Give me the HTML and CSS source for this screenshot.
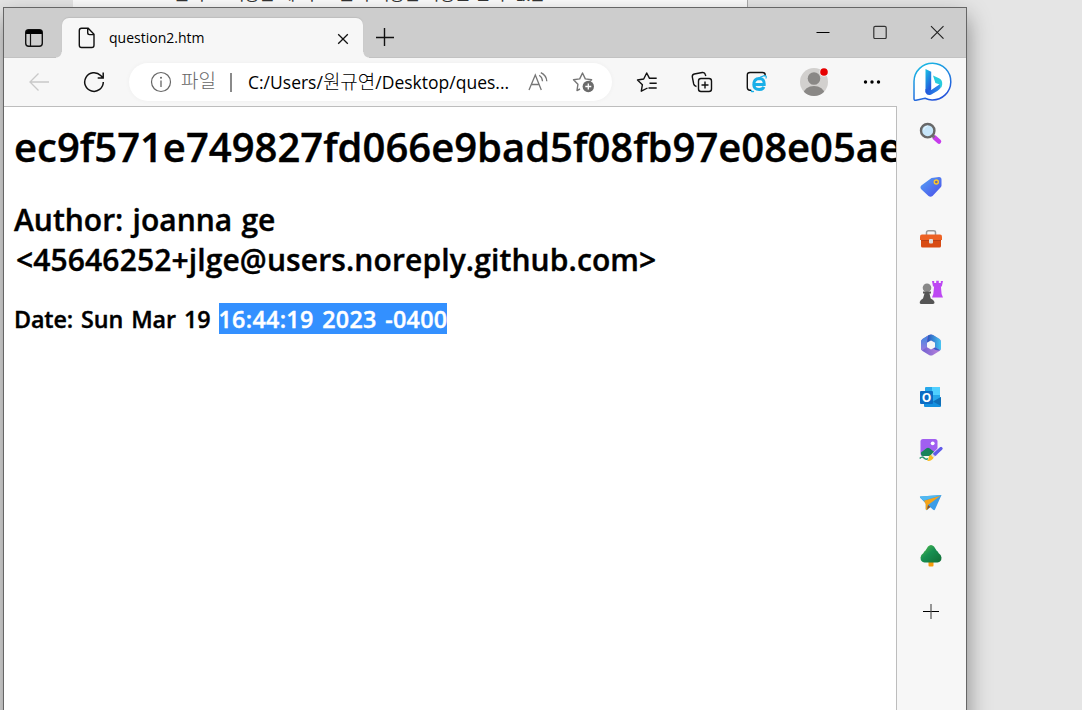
FILE: index.html
```html
<!DOCTYPE html>
<html lang="ko">
<head>
<meta charset="utf-8">
<title>question2.htm</title>
<link rel="stylesheet" href="styles.css">
</head>
<body>
<div class="backdrop"><div class="backdrop-text">들의 호 기능은 에 이 그 들의 기능은 가능을 할 수 없습</div></div>
<main class="window">
  <header class="tabstrip">
    <svg class="tab-menu" width="20" height="20" viewBox="0 0 20 20"><rect x="1.7" y="1.7" width="16.6" height="16.6" rx="3" fill="none" stroke="#111" stroke-width="1.4"/><path d="M2 6V4q0-2 2-2h12q2 0 2 2v2z"/><path d="M6.5 6v12" stroke="#111" stroke-width="1.2"/></svg>
    <div class="tab">
      <svg class="file" width="18" height="22" viewBox="0 0 18 22" fill="none" stroke="#111" stroke-width="1.4"><path d="M3.5 1.2h6.7l5.8 6v11.1q0 2.2-2.2 2.2H3.5q-2.2 0-2.2-2.2V3.400q0-2.200 2.200-2.200zM9.700 1.500v4.300q0 1.800 1.800 1.800h4.200"/></svg>
      <span class="tab-title">question2.htm</span>
      <svg class="tab-close" width="12" height="12" viewBox="0 0 12 12"><path d="M1.2 1.2l9.600 9.600M10.800 1.200l-9.600 9.600" stroke="#111" stroke-width="1.3"/></svg>
    </div>
    <svg class="new-tab" width="18" height="18" viewBox="0 0 18 18"><path d="M0 9.500h18M8.500 0v18" stroke="#111" stroke-width="1.4"/></svg>
    <div class="controls">
      <svg width="14" height="14" viewBox="0 0 14 14"><path d="M.5 7.500h13" stroke="#000"/></svg>
      <svg width="14" height="14" viewBox="0 0 14 14"><rect x=".8" y="1.300" width="12.4" height="12.4" rx="1.5" fill="none" stroke="#333" stroke-width="1.2"/></svg>
      <svg width="14" height="14" viewBox="0 0 14 14"><path d="M1 1.200l12.500 12.500M13.500 1.200L1 13.700" stroke="#222" stroke-width="1.1"/></svg>
    </div>
  </header>
  <div class="body">
    <section class="main">
      <div class="toolbar">
        <svg class="back" width="22" height="20" viewBox="0 0 22 20" fill="none" stroke="#c9c9c9" stroke-width="1.3"><path d="M21 10H2M10.500 1.500L2 10l8.500 8.500"/></svg>
        <svg class="reload" width="22" height="22" viewBox="0 0 22 22" fill="none" stroke="#111" stroke-width="1.5"><path d="M20.300 11A9.300 9.300 0 1 1 17.700 4.600L20 7M20.200 1.500V7h-5.500"/></svg>
        <div class="address">
          <svg class="info" width="22" height="22" viewBox="0 0 22 22"><circle cx="11" cy="11" r="9.500" fill="none" stroke="#666" stroke-width="1.200"/><path d="M11 9.500v6.500" stroke="#666" stroke-width="1.300"/><circle cx="11" cy="6.700" r="1" fill="#666"/></svg>
          <span class="scheme">파일</span><span class="divider"></span>
          <span class="url">C:/Users/<span class="hangul">원규연</span>/Desktop/ques...</span>
          <svg class="read" width="22" height="22" viewBox="0 0 22 22" fill="none" stroke="#767676" stroke-width="1.300"><path d="M2 19L8.300 4l6 15M4.300 13.500h7.800M12.200 4.200q3 1.800 3.300 6M13.800 1.700q5.500 2.500 6 8.500"/></svg>
          <svg class="star" width="24" height="22" viewBox="0 0 24 22"><path d="M8 18l-3 1.500.9-6.200L1.500 8.800l6.200-.9L10.500 2l2.800 5.900 6.300.9-2.100 2" fill="none" stroke="#767676" stroke-width="1.400" stroke-linejoin="round"/><circle cx="16.300" cy="15.500" r="5.700" fill="#6b6b6b"/><path d="M13.300 15.500h6M16.300 12.500v6" stroke="#fff" stroke-width="1.300"/></svg>
        </div>
        <svg class="favorites" width="22" height="22" viewBox="0 0 22 22" fill="none" stroke="#111" stroke-width="1.400" stroke-linejoin="round"><path d="M11.500 17l-6.200 3.200 1.100-6.500L1.500 9l6.200-1L10.700 2l2.800 5.300h7.200M13.500 12.300h7.200M12.500 17h8.200"/></svg>
        <svg class="collections" width="22" height="22" viewBox="0 0 22 22" fill="none" stroke="#111" stroke-width="1.400"><path d="M5.500 15.500q-2.300-.3-2.800-2.500L1.300 6Q1 3.600 3.300 3l8-1.500q2.500-.3 3 2L14.800 5"/><rect x="7.500" y="7.500" width="13" height="13" rx="2.500"/><path d="M10.500 14h7M14 10.500v7"/></svg>
        <svg class="ie-mode" width="22" height="22" viewBox="0 0 22 22" fill="none"><path d="M5 19.300H4q-2.700 0-2.700-2.700V4Q1.300 1.500 4 1.500h12.500q2.700 0 2.700 2.500v1" stroke="#111" stroke-width="1.400"/><path d="M9 13.600h9.200q.3-6-4.700-6-5.700.2-5.700 6 0 5 5.400 5 3.700-.2 4.700-2.700" stroke="#19afe8" stroke-width="3"/><path d="M6 18.800q-2 2.500 2 1.500M7 12Q12 6 18.700 4.600q2.400 0 1.100 3" stroke="#19afe8" stroke-width="1.200"/></svg>
        <svg class="profile" width="30" height="30" viewBox="0 0 30 30"><defs><clipPath id="avatar"><circle cx="14" cy="16" r="14"/></clipPath></defs><circle cx="14" cy="16" r="14" fill="#d2d0ce"/><g clip-path="url(#avatar)" fill="#8a8886"><circle cx="14" cy="12.500" r="6.300"/><ellipse cx="14" cy="28" rx="10.500" ry="8"/></g><circle cx="24" cy="6" r="4.500" fill="#f7f7f7"/><circle cx="24" cy="6" r="3.800" fill="#e60000"/></svg>
        <svg class="more" width="18" height="6" viewBox="0 0 18 6"><circle cx="2.500" cy="3" r="1.700"/><circle cx="9" cy="3" r="1.700"/><circle cx="15.500" cy="3" r="1.700"/></svg>
      </div>
      <article class="page">
        <h1>ec9f571e749827fd066e9bad5f08fb97e08e05ae</h1>
        <h2><span class="author">Author: joanna ge</span><br><span class="email">&lt;45646252+jlge@users.noreply.github.com&gt;</span></h2>
        <h3><span class="date">Date: Sun Mar 19 </span><mark>16:44:19 2023 -0400</mark></h3>
      </article>
    </section>
    <aside class="sidebar">
      <svg class="bing" width="42" height="42" viewBox="0 0 42 42"><defs><linearGradient id="b1" x1="0" y1="0" x2=".5" y2="1"><stop stop-color="#19c5e5"/><stop offset="1" stop-color="#2455db"/></linearGradient><linearGradient id="b2" x2="1" y2="0"><stop stop-color="#2357da"/><stop offset="1" stop-color="#2d91ed"/></linearGradient></defs><path d="M3 37.500V20A18.400 18.400 0 1 1 21 38.700q-3.200 0-7-1.700L5 39q-2 .2-2-1.500z" transform="translate(0 .3)" fill="#fff" stroke="url(#b1)" stroke-width="1.500"/><path d="M14.500 8l5.700 2.700v18l-5.700 2.500z" fill="url(#b1)"/><path d="M14.500 28l5.800 1 9.500-6.500q1 5-3.500 7.500l-6 3.500q-4 1.700-5.800-2z" fill="url(#b2)"/><path d="M22 14.500l6.500 3q3 1.500 2.700 6-.3 2.500-1.800 4 .5-3.500-2-4.500l-3-1z" fill="#28ccdd"/></svg>
      <svg width="24" height="24" viewBox="0 0 24 24"><path d="M15.500 15.500l4.500 4" stroke="#c63cec" stroke-width="4.500" stroke-linecap="round"/><path d="M13.500 13.500l2 2" stroke="#777" stroke-width="2.500"/><circle cx="8.700" cy="8.700" r="6.700" fill="#c7e6fa" stroke="#686868" stroke-width="2.400"/><path d="M4.500 8q.8-3.500 4-4" stroke="#e8f7ff" fill="none"/></svg>
      <svg width="24" height="24" viewBox="0 0 24 24"><defs><linearGradient id="tag" x2="1" y2="1"><stop stop-color="#56a5f5"/><stop offset="1" stop-color="#4a4be9"/></linearGradient></defs><path d="M12.500 3l7.500-1q2.500 0 2.500 2.500v6q0 1-1 2l-8 8.500q-2 1.500-4 0l-7-6.500q-2-2-.2-4z" fill="url(#tag)"/><circle cx="17.300" cy="7" r="2" fill="#706b9b" stroke="#ffc928" stroke-width="1.400"/></svg>
      <svg width="24" height="24" viewBox="0 0 24 24"><path d="M7.500 8V5.500q0-1.700 2-1.700h5q2 0 2 1.700V8" fill="none" stroke="#999" stroke-width="1.500"/><rect x="2" y="11" width="20" height="9.500" rx="1.500" fill="#d84b13"/><path d="M3 7.500h18q2 0 2 2v3.500H1V9.500q0-2 2-2z" fill="#ed6225"/><path d="M2 13h20v1H2z" fill="#b93f14"/><rect x="10" y="12" width="4" height="4.500" rx="1" fill="#ddd"/></svg>
      <svg width="24" height="24" viewBox="0 0 24 24"><path d="M13 1h2.200v2h2V.7h2.600V3h2V1H24l-1.200 5.500h-.9l.7 7.500 1.400 3.500H13l1.300-3.500.8-7.500H14z" fill="#bd48f3"/><circle cx="8" cy="7.700" r="4.300" fill="#888"/><path d="M4 11.500h8v2h-1.500l1.200 5q3 1 3.800 3.500.2 2-1.500 2H2q-1.500 0-1.300-2 .8-2.500 3.300-3.500l1.500-5H4z" fill="#555"/></svg>
      <svg width="24" height="24" viewBox="0 0 24 24"><defs><linearGradient id="m1" x2="1"><stop stop-color="#6c5fd0"/><stop offset="1" stop-color="#c084dc"/></linearGradient><linearGradient id="m2"><stop stop-color="#2b50bb"/><stop offset="1" stop-color="#48c7f2"/></linearGradient><linearGradient id="m3" x2="0" y2="1"><stop stop-color="#3c8ae0"/><stop offset="1" stop-color="#9a7be0"/></linearGradient></defs><path d="M10 2Q12 .8 14 2l6.500 4Q22 7 22 9v6q0 2-1.500 3L14 22q-2 1.200-4 0l-6.500-4Q2 17 2 15V9q0-2 1.500-3z" fill="url(#m1)"/><path d="M9 2.500L10 2q2-1 4 0l6.500 4Q22 7 22 9v6q0 1.500-.8 2.300L16 14V9.700l-4-2.200-4 2.200z" fill="url(#m2)"/><path d="M9 2.500Q7.500 4 8 7v7l-5 3.500Q2 16.500 2 15V9q0-2 1.500-3z" fill="url(#m3)"/><path d="M16 14.300l5.200 3q-4 .7-7-1.800z" fill="#3b5fc9"/><path d="M12 7.500l4 2.200v4.600l-4 2.200-4-2.200V9.700z" fill="#f7f7f7"/></svg>
      <svg class="outlook" width="24" height="24" viewBox="0 0 24 24"><rect x="6" y="2" width="15" height="18" rx="1" fill="#28a8ea"/><path d="M13 2h8v8h-8z" fill="#50d0ff"/><path d="M5 12l9 5 8-5v9q0 1-1 1H6q-1 0-1-1z" fill="#1490df"/><path d="M22 12v9l-8-4.500z" fill="#0f6fb8"/><rect x="1" y="6" width="13" height="13" rx="1" fill="#0c6cc4"/><text x="7.500" y="17">O</text></svg>
      <svg width="24" height="24" viewBox="0 0 24 24"><rect x="1.500" y="1" width="17" height="17" rx="2.500" fill="#a15ff0"/><path d="M2 14.500l5.500-4.300q1.500-1 3 0l5.500 4.300-2 3.500H4q-2 0-2-2z" fill="#17835a"/><circle cx="13.700" cy="5.300" r="1.900" fill="#fff"/><path d="M.7 20.500q2.500-2.500 4.300-.5t4 .7" fill="none" stroke="#27946b" stroke-width="1.500"/><path d="M15 17l7-6.500" stroke="#fff" stroke-width="5" stroke-linecap="round" opacity=".7"/><path d="M15.500 16.500l6.500-6" stroke="#615be9" stroke-width="3.300" stroke-linecap="round"/><path d="M13.500 15.500l2.800 2.800-1.800 1.500-2.700-2.700z" fill="#e0e0e0"/><path d="M11.500 16.700l3.200 3.100q-2 3.700-6.700 3 2-1 1.500-3 .3-2.300 2-3.100z" fill="#f8bd24"/></svg>
      <svg width="24" height="24" viewBox="0 0 24 24"><path d="M1 5.500L22.500 4 16 18.500q-.7 1.200-1.800.3l-3.500-3L8 19q-1.200.5-1.200-1v-5.500L1.500 7q-.8-.8-.5-1.500z" fill="#3b9de8"/><path d="M22.500 4L5 9.500 1.500 7q-1-1 0-1.500z" fill="#52b9f1"/><path d="M21.500 4.700L5 9.700l1.700 3.500V18q.3 1.500 1.500.8L9 14z" fill="#f5a318"/><path d="M8 18.800l1-4.800 2.500 2z" fill="#875326"/></svg>
      <svg width="24" height="24" viewBox="0 0 24 24"><defs><linearGradient id="tree" x2="1" y2="1"><stop stop-color="#5ac24b"/><stop offset=".45" stop-color="#189052"/><stop offset="1" stop-color="#116d35"/></linearGradient></defs><rect x="9.500" y="15" width="5" height="7.500" rx="1" fill="#f69b0b"/><path d="M9 2.500Q12-.5 15 2.500l2.700 4.200q1.600.7 1.800 2.300 2.800 1.800 3 4.500 0 4.500-4 5h-13q-4-.5-4-5 .2-2.700 3-4.500.2-1.600 1.800-2.300z" fill="url(#tree)"/></svg>
      <svg class="add" width="16" height="16" viewBox="0 0 16 16"><path d="M0 8.500h16" stroke="#000"/><path d="M8 1v15" stroke="#555" stroke-width="1.200"/></svg>
    </aside>
  </div>
</main>
</body>
</html>
```
FILE: styles.css
```css
* { box-sizing: border-box; }
body {
  width: 1082px;
  height: 710px;
  margin: 0;
  overflow: hidden;
  background: #e5e5e5;
  color: #000;
  font-family: "Open Sans", "Noto Sans CJK KR", sans-serif;
}
svg { display: block; flex-shrink: 0; }
.backdrop {
  width: 675px;
  height: 7px;
  margin-left: 73px;
  background: #fcfcfc;
  border-right: 1px solid #aaa;
  overflow: hidden;
}
.backdrop-text {
  margin: -19px 0 0 101px;
  font: 17px/24px "Noto Sans CJK KR", sans-serif;
  letter-spacing: -.3px;
  white-space: nowrap;
  color: #333;
}
.window {
  position: relative;
  width: 964px;
  height: 720px;
  margin-left: 3px;
  border: 1px solid #666;
  background: #f7f7f7;
  box-shadow: 0 10px 22px rgb(0 0 0 / 42%);
}
.tabstrip {
  display: flex;
  height: 50px;
  padding-left: 20px;
  background: #cdcdcd;
  border-bottom: 1px solid #c2c2c2;
}
.tab-menu { margin-top: 20px; }
.tab {
  position: relative;
  display: flex;
  align-items: center;
  width: 301px;
  height: 40px;
  margin: 10px 0 0 18px;
  padding: 0 14px 0 16px;
  border-radius: 7px 7px 0 0;
  background: #f7f7f7;
  box-shadow: 0 -1px 1px #bebebe;
}
.tab::before, .tab::after {
  content: "";
  position: absolute;
  bottom: 0;
  width: 6px;
  height: 6px;
}
.tab::before {
  left: -6px;
  background: radial-gradient(circle at 0 0, #cdcdcd 5px, #f7f7f7 6px);
}
.tab::after {
  right: -6px;
  background: radial-gradient(circle at 100% 0, #cdcdcd 5px, #f7f7f7 6px);
}
.tab-title {
  flex: 1;
  margin: -2px 0 0 13px;
  font-size: 14px;
}
.tab-close { margin-top: 2px; }
.new-tab { margin: 20px 0 0 13px; }
.controls {
  display: flex;
  gap: 43px;
  margin: 17px 22px 0 auto;
}
.body { display: flex; height: 670px; }
.main { width: 893px; }
.toolbar {
  display: flex;
  align-items: center;
  height: 48px;
  padding-left: 24px;
}
.reload { margin-left: 33px; }
.address {
  display: flex;
  align-items: center;
  width: 483px;
  height: 38px;
  margin-left: 24px;
  padding-left: 21px;
  border-radius: 19px;
  background: #fff;
  box-shadow: 0 0 5px rgb(0 0 0 / 4%);
}
.scheme {
  width: 36px;
  margin: -4px 0 0 9px;
  color: #666;
  font: 300 19px/28px "Noto Sans CJK KR", sans-serif;
}
.divider {
  width: 2px;
  height: 19px;
  margin-left: 13px;
  background: #8a8a8a;
}
.url {
  width: 263px;
  margin: -2px 0 0 16px;
  font-size: 17.5px;
  line-height: 28px;
  white-space: nowrap;
}
.hangul { font: 300 19px/28px "Noto Sans CJK KR", sans-serif; }
.read { margin-left: 16px; }
.star { margin-left: 23px; }
.favorites { margin-left: 24px; }
.collections { margin-left: 33px; }
.ie-mode { margin-left: 33px; }
.profile { margin: -3px 0 0 32px; }
.more { margin-left: 33px; }
.page {
  height: 622px;
  padding: 13px 0 0 10px;
  overflow: hidden;
  background: #fff;
  border-top: 1px solid #bdbdbd;
  border-right: 1px solid #bdbdbd;
}
.page h1, .page h2, .page h3 {
  margin: 0;
  font-weight: 600;
  white-space: nowrap;
  -webkit-text-stroke: .4px currentColor;
}
.page h1 { font-size: 40px; line-height: 54px; }
.page h2 { margin-top: 26px; font-size: 30px; line-height: 40px; }
.page h3 { margin-top: 23px; font-size: 23.3px; line-height: 31px; }
.author { word-spacing: 1.5px; }
.email { margin-left: 2px; letter-spacing: .12px; }
.date { white-space: pre; word-spacing: 2.2px; letter-spacing: -.13px; }
mark {
  display: inline-block;
  height: 31px;
  line-height: 32px;
  color: #fff;
  background: #3390ff;
  word-spacing: 2.2px;
  letter-spacing: .3px;
}
.sidebar {
  display: flex;
  flex-direction: column;
  align-items: center;
  width: 69px;
}
.bing { margin: 3px 0 8px; }
.sidebar > svg:not(.bing):not(.add) { margin: 11px 1px 17.7px 0; }
.sidebar > .add { margin: 18px 2px 0 0; }
.outlook text {
  font: 700 12px "Open Sans", sans-serif;
  text-anchor: middle;
  fill: #fff;
}
```
